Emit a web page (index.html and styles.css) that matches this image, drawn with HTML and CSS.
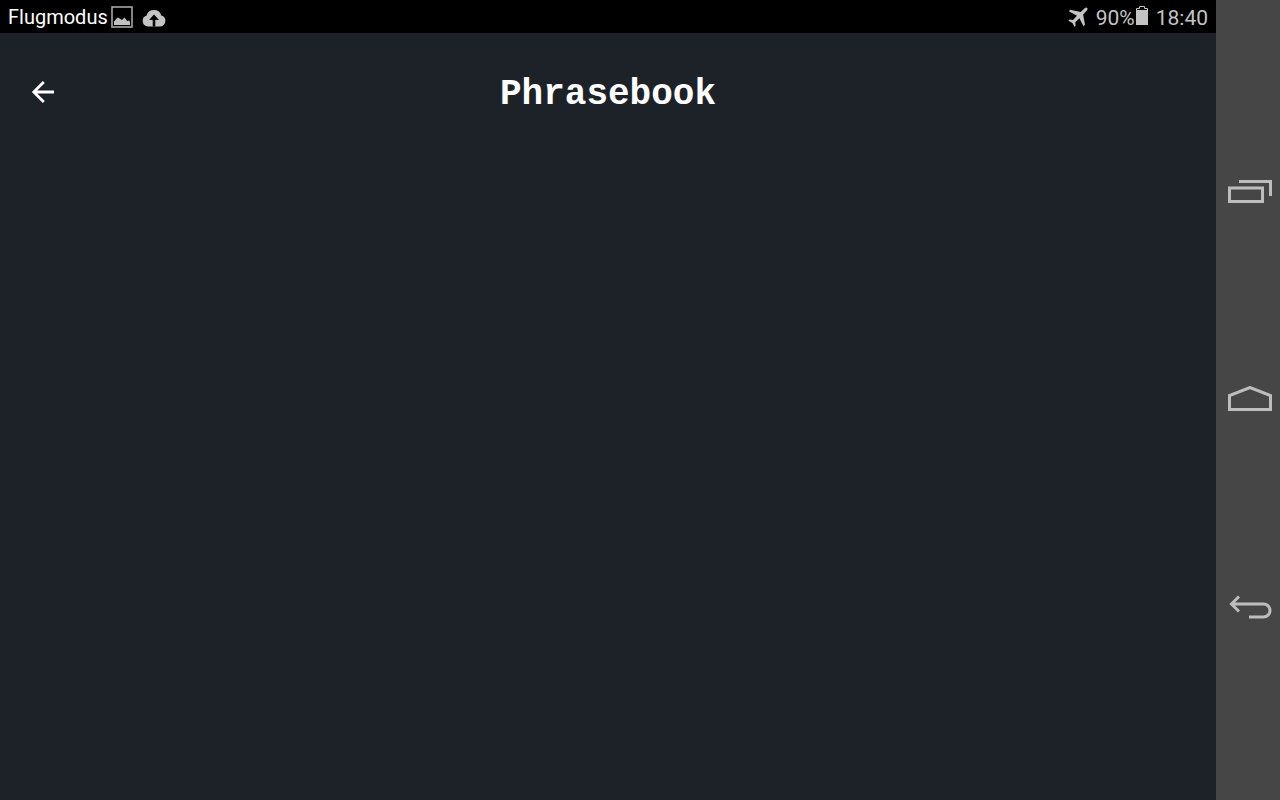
FILE: index.html
```html
<!DOCTYPE html>
<html lang="en">
<head>
<meta charset="utf-8">
<meta name="viewport" content="width=device-width, initial-scale=1">
<title>Phrasebook</title>
<link rel="stylesheet" href="styles.css">
</head>
<body>
<div class="screen">
  <div class="main">
    <div class="status-bar">
      <div class="status-left">
        <span class="carrier" lang="de">Flugmodus</span>
        <svg class="icon-picture" width="22" height="22" viewBox="0 0 22 22" aria-hidden="true">
          <rect x="1" y="1" width="20" height="20" fill="none" stroke="#a6a6a6" stroke-width="1.6"/>
          <path d="M3 19V15.5Q4 14.5 5 13L7 11.5L9 12.8L11 14L13.5 11.5L16 15L18 14.5L19 16V19Z" fill="#c0c0c0"/>
        </svg>
        <svg class="icon-cloud" width="24" height="18" viewBox="0 0 24 18" aria-hidden="true">
          <path d="M6 17.5A5.7 5.7 0 0 1 4.6 6.4A7.7 7.7 0 0 1 19.3 6.4A5.7 5.7 0 0 1 18.5 17.5Z" fill="#c4c4c4"/>
          <path d="M12 5.5L17 11H13.3V17.5H10.7V11H7Z" fill="#000"/>
        </svg>
      </div>
      <div class="status-right">
        <svg class="icon-plane" width="20" height="20" viewBox="0 0 20 20" aria-hidden="true">
          <path d="M19.3 1Q18.3 0 16.7 1.3L12.7 5L2.2 2.7L.8 4.2L9 8.8L5 13L1.5 12.6L.4 13.8L4.5 15.9L6.4 19.7L7.6 18.6L7.3 15.2L11.4 11.3L15.5 19.3L17 17.8L15.1 7.5L18.8 3.6Q20 2 19.3 1Z" fill="#c4c4c4"/>
        </svg>
        <span class="battery-level">90%</span>
        <svg class="icon-battery" width="12" height="20" viewBox="0 0 12 20" aria-hidden="true">
          <path d="M.5 4V2.5H3.5V.5H8.5V2.5H11.5V4" fill="none" stroke="#c4c4c4"/>
          <path d="M0 4H12V19H0Z" fill="#c4c4c4"/>
        </svg>
        <time class="clock">18:40</time>
      </div>
    </div>
    <header class="app-bar">
      <button class="app-back" type="button" aria-label="Go back">
        <svg width="24" height="24" viewBox="0 0 24 24" fill="none" stroke="#fff" stroke-width="2.8" aria-hidden="true">
          <path d="M23 12H3M12.8 2L2.8 12L12.8 22"/>
        </svg>
      </button>
      <h1 class="title">Phrasebook</h1>
    </header>
    <main class="content"></main>
  </div>
  <nav class="system-nav" aria-label="System">
    <button class="nav-button" type="button" aria-label="Recent apps">
      <svg width="44" height="26" viewBox="0 0 44 26" aria-hidden="true">
        <path d="M1.5 9H34.5V22.5H1.5ZM11 2.5H42.5V17" />
      </svg>
    </button>
    <button class="nav-button" type="button" aria-label="Home">
      <svg width="44" height="26" viewBox="0 0 44 26" aria-hidden="true">
        <path d="M1.5 23.5V9.5L22 1.5L42.5 9.5V23.5Z" />
      </svg>
    </button>
    <button class="nav-button" type="button" aria-label="Back">
      <svg width="44" height="26" viewBox="0 0 44 26" aria-hidden="true">
        <path d="M11 3.5L3.5 11L11 18.5M3.5 11H35.5A6.5 6.5 0 0 1 35.5 24H21" />
      </svg>
    </button>
  </nav>
</div>
</body>
</html>
```
FILE: styles.css
```css
* {
  box-sizing: border-box;
}

body {
  margin: 0;
  background: #1d2228;
  color: #fff;
  font-family: Roboto, "Liberation Sans", sans-serif;
}

button {
  border: 0;
  padding: 0;
  background: none;
  color: inherit;
  cursor: pointer;
}

svg {
  display: block;
  flex: none;
}

.screen {
  display: grid;
  grid-template-columns: 1fr 64px;
  min-height: 100vh;
}

.main {
  display: flex;
  flex-direction: column;
}

.status-bar {
  display: flex;
  align-items: center;
  justify-content: space-between;
  height: 33px;
  padding: 0 8px;
  background: #000;
  font-size: 20px;
  line-height: 24px;
}

.status-left,
.status-right {
  display: flex;
  align-items: center;
}

.icon-picture {
  margin-left: 3px;
}

.icon-cloud {
  margin: 2px 0 0 9px;
}

.status-right {
  padding-top: 2px;
  color: #c4c4c4;
  font-size: 21px;
}

.battery-level {
  margin-left: 8px;
}

.icon-plane {
  margin-bottom: 2px;
}

.icon-battery {
  margin: 0 0 3px 1px;
}

.clock {
  margin-left: 8px;
}

.app-bar {
  display: grid;
  grid-template-columns: 48px 1fr 48px;
  align-items: center;
  padding: 35px 19px;
}

.app-back {
  display: grid;
  place-items: center;
  height: 48px;
}

.title {
  margin: 0;
  padding-top: 6px;
  font: bold 36px/42px "Liberation Mono", monospace;
  text-align: center;
}

.content {
  flex: 1;
}

.system-nav {
  display: flex;
  flex-direction: column;
  justify-content: center;
  padding: 0 0 2px 4px;
  background: #464646;
}

.nav-button {
  display: grid;
  place-items: center;
  flex: 0 0 26%;
}

.nav-button svg {
  fill: none;
  stroke: #bdbdbd;
  stroke-width: 3;
}
```
